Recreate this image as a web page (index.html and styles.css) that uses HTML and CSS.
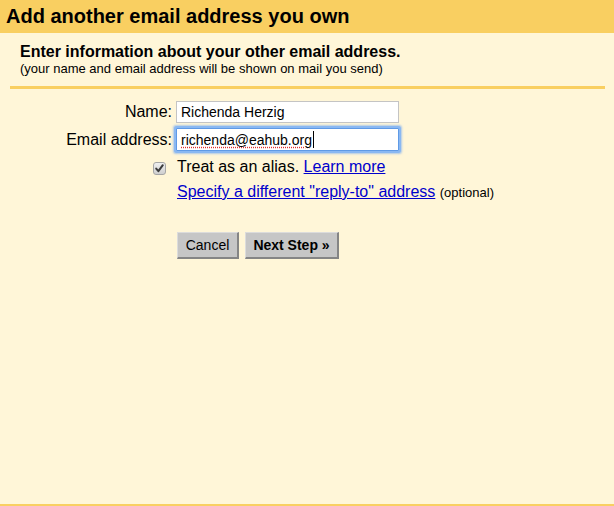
FILE: index.html
```html
<!DOCTYPE html>
<html>
<head>
<meta charset="utf-8">
<link rel="stylesheet" href="styles.css">
</head>
<body>
<div class="page">
  <div class="header">Add another email address you own</div>
  <div class="intro">
    <div class="intro-title">Enter information about your other email address.</div>
    <div class="intro-note">(your name and email address will be shown on mail you send)</div>
  </div>
  <div class="form">
    <div class="row row-name">
      <div class="label">Name:</div>
      <div class="field">Richenda Herzig</div>
    </div>
    <div class="row row-email">
      <div class="label">Email address:</div>
      <div class="field field-focus"><span class="misspelt">richenda@eahub.org</span><span class="caret"></span></div>
    </div>
    <div class="row row-alias">
      <div class="label label-check">
        <span class="checkbox"><svg width="11" height="11" viewBox="0 0 11 11"><path d="M2.2 5.6 L4.4 8.2 L8.8 2.2" fill="none" stroke="#3c3c3c" stroke-width="2" stroke-linecap="round" stroke-linejoin="round"/></svg></span>
      </div>
      <div class="text">Treat as an alias. <a href="#" class="link">Learn more</a></div>
    </div>
    <div class="row row-reply">
      <div class="label"></div>
      <div class="text"><a href="#" class="link">Specify a different "reply-to" address</a> <span class="optional">(optional)</span></div>
    </div>
    <div class="row row-buttons">
      <div class="label"></div>
      <div class="buttons">
        <button class="btn btn-cancel">Cancel</button>
        <button class="btn btn-next">Next Step »</button>
      </div>
    </div>
  </div>
</div>
</body>
</html>
```
FILE: styles.css
```css
html, body {
  margin: 0;
  padding: 0;
}
body {
  background: #fff6d8;
  font-family: "Liberation Sans", Arial, sans-serif;
  color: #000;
}
.page {
  min-height: 506px;
  box-sizing: border-box;
  border-bottom: 2px solid #f9cf61;
}
.header {
  background: #f9cf61;
  height: 33px;
  line-height: 33px;
  padding-left: 6px;
  font-size: 20px;
  font-weight: bold;
}
.intro {
  margin: 0 9px 0 10px;
  padding: 10px 0 10px 10px;
  border-bottom: 3px solid #f9cf61;
}
.intro-title {
  font-size: 16px;
  font-weight: bold;
  line-height: 17px;
}
.intro-note {
  font-size: 13px;
  line-height: 14px;
  margin-top: 2px;
}
.form {
  display: flex;
  flex-direction: column;
  padding-top: 12px;
}
.row {
  display: flex;
  align-items: center;
}
.label {
  width: 172px;
  text-align: right;
  font-size: 16px;
  margin-right: 4px;
  flex-shrink: 0;
}
.field {
  width: 223px;
  height: 22px;
  box-sizing: border-box;
  border: 1px solid #c4c4c4;
  background: #fff;
  font-size: 14px;
  line-height: 20px;
  padding-left: 4px;
  display: flex;
  align-items: center;
}
.row-email {
  margin-top: 5px;
}
.field-focus {
  height: 23px;
  border: 1px solid #5f9ae6;
  box-shadow: 0 0 0 2px #8ab8f2, 0 0 2px 3px rgba(120, 170, 240, 0.6);
  border-radius: 1px;
}
.misspelt {
  text-decoration: underline dotted #e03030;
  text-underline-offset: 2px;
}
.caret {
  display: inline-block;
  width: 1px;
  height: 17px;
  background: #000;
  margin-left: 1px;
}
.row-alias {
  margin-top: 6px;
  height: 20px;
}
.label-check {
  display: flex;
  justify-content: flex-end;
  padding-right: 6px;
  box-sizing: border-box;
}
.checkbox {
  width: 13px;
  height: 13px;
  box-sizing: border-box;
  border: 1px solid #a6a6a6;
  border-radius: 3px;
  background: linear-gradient(#f0f0f0, #cfcfcf);
  display: flex;
  align-items: center;
  justify-content: center;
  margin-top: 3px;
}
.checkbox svg {
  display: block;
}
.text {
  font-size: 16px;
  line-height: 20px;
  padding-left: 1px;
  white-space: nowrap;
}
.link {
  color: #0000cc;
  text-decoration: underline;
}
.row-reply {
  margin-top: 5px;
  height: 20px;
}
.optional {
  font-size: 13px;
}
.row-buttons {
  margin-top: 30px;
}
.buttons {
  display: flex;
  gap: 6px;
  padding-left: 1px;
}
.btn {
  font-family: "Liberation Sans", Arial, sans-serif;
  font-size: 14px;
  height: 27px;
  box-sizing: border-box;
  background: #c6c6c6;
  border-style: solid;
  border-width: 1px 2px 2px 1px;
  border-color: #dcdcdc #858585 #858585 #dcdcdc;
  color: #000;
  padding: 0;
  margin: 0;
  cursor: pointer;
}
.btn-cancel {
  width: 62px;
}
.btn-next {
  width: 94px;
  font-weight: bold;
}
```
